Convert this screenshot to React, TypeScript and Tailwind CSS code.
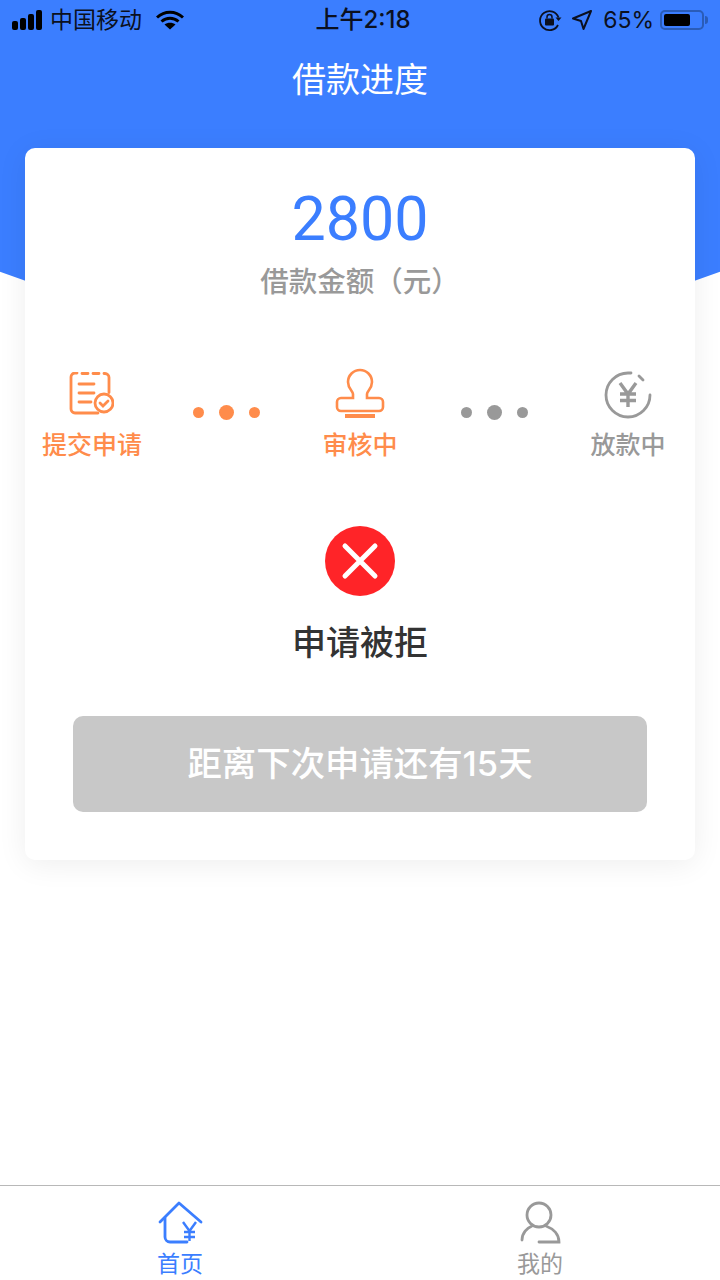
const cjk = "font-['Inter','Noto_Sans_CJK_SC',sans-serif]"

function StatusBar() {
  return (
    <div className="h-[40px] px-[12px] flex items-center justify-between text-[#0b1020] relative">
      <div className="flex items-center">
        <div className="flex items-end gap-[2px] h-[20px] mb-[1px]">
          <span className="w-[6px] h-[9px] rounded-[2px] bg-black"></span>
          <span className="w-[6px] h-[12px] rounded-[2px] bg-black"></span>
          <span className="w-[6px] h-[16px] rounded-[2px] bg-black"></span>
          <span className="w-[6px] h-[20px] rounded-[2px] bg-black"></span>
        </div>
        <span className="ml-[8px] text-[23px] leading-none">中国移动</span>
        <svg className="ml-[14px]" width="28" height="20" viewBox="0 0 28 20">
          <path d="M1 7.5C8.5 .5 19.5 .5 27 7.5" fill="none" stroke="#000" strokeWidth="3" />
          <path d="M5.5 11.5C10.5 7 17.5 7 22.5 11.5" fill="none" stroke="#000" strokeWidth="3" />
          <path d="M14 19.5L8.5 14.5C11.5 12 16.5 12 19.5 14.5Z" fill="#000" />
        </svg>
      </div>
      <div className="absolute left-[6px] right-0 text-center text-[24px] leading-none font-medium">上午2:18</div>
      <div className="flex items-center">
        <svg width="24" height="24" viewBox="0 0 24 24" fill="none">
          <path d="M20.5 9.5A9.5 9.5 0 1 0 20 17" stroke="#0b1020" strokeWidth="1.8" />
          <path d="M17.5 9.5h6l-3 3.5Z" fill="#0b1020" />
          <rect x="7" y="10.5" width="9" height="7" rx="1" fill="#0b1020" />
          <path d="M9 10.5V9a2.5 2.5 0 0 1 5 0v1.5" stroke="#0b1020" strokeWidth="1.5" />
        </svg>
        <svg className="ml-[9px]" width="22" height="22" viewBox="0 0 22 22" fill="none">
          <path d="M20 2L2 9.5l8 2.5 2.5 8Z" stroke="#0b1020" strokeWidth="2" strokeLinejoin="round" />
        </svg>
        <span className="ml-[10px] text-[23px] leading-none">65%</span>
        <div className="ml-[6px] w-[44px] h-[20px] rounded-[5px] border-2 border-[#2a5cb8] p-[2px] flex">
          <div className="w-[26px] h-full rounded-[2px] bg-black"></div>
        </div>
        <div className="ml-[1px] w-[3px] h-[8px] rounded-r-full bg-[#2a5cb8]"></div>
      </div>
    </div>
  )
}

function Dots({ color }: { color: string }) {
  return (
    <div className="h-[46px] flex items-center justify-center gap-[15px] self-start mt-[19px]">
      <span className={`w-[11px] h-[11px] rounded-full ${color}`}></span>
      <span className={`w-[15px] h-[15px] rounded-full ${color}`}></span>
      <span className={`w-[11px] h-[11px] rounded-full ${color}`}></span>
    </div>
  )
}

function Step({ label, color, children }: { label: string; color: string; children: React.ReactNode }) {
  return (
    <div className="flex flex-col items-center">
      <div className="h-[50px] flex items-center justify-center">{children}</div>
      <span className={`mt-[7px] text-[25px] leading-[36px] font-medium ${color}`}>{label}</span>
    </div>
  )
}

function App() {
  return (
    <div className={`relative w-[720px] h-[1280px] bg-white overflow-hidden flex flex-col ${cjk}`}>
      <div className="absolute top-[-1717px] left-[-667px] w-[2054px] h-[2054px] rounded-full bg-[#3b7eff]"></div>
      <div className="relative flex-1 flex flex-col">
        <StatusBar />
        <h1 className="mt-[6px] h-[56px] text-center text-[34px] leading-[68px] text-white">借款进度</h1>

        <div className="mt-[46px] mx-[25px] h-[712px] bg-white rounded-[10px] shadow-[0_4px_30px_rgba(0,0,0,0.07)] flex flex-col items-center">
          <div className="mt-[33px] font-['Roboto',sans-serif] text-[61px] leading-[76px] text-[#3b7eff]">2800</div>
          <div className="mt-[5px] text-[28.500px] leading-[40px] font-medium text-[#999999]">借款金额（元）</div>

          <div className="mt-[68px] w-full grid grid-cols-5">
            <Step label="提交申请" color="text-[#ff8c4b]">
              <svg width="46" height="46" viewBox="0 0 46 46" fill="none" stroke="#ff8c4b" strokeWidth="2.8" strokeLinecap="round" className="mr-[2px]">
                <path d="M30 41H7a4 4 0 0 1-4-4V5a4 4 0 0 1 4-4h2" />
                <path d="M14 1.500h6M25 1.500h6M36 1.500h1a4 4 0 0 1 4 4v15" />
                <path d="M11 12h15M11 21h15M11 30h12" />
                <circle cx="36" cy="31" r="9" />
                <path d="M32 31l3 3 5-5" />
              </svg>
            </Step>
            <Dots color="bg-[#ff8c4b]" />
            <Step label="审核中" color="text-[#ff8c4b]">
              <svg width="48" height="50" viewBox="0 2 48 50" fill="none" stroke="#ff8c4b" strokeWidth="2.6" className="overflow-visible">
                <path d="M17 30v-4c0-3-5-5-5-12a12 12 0 0 1 24 0c0 7-5 9-5 12v4h12a4 4 0 0 1 4 4v5a4 4 0 0 1-4 4H5a4 4 0 0 1-4-4v-5a4 4 0 0 1 4-4Z" />
                <path d="M9 48h30" strokeWidth="4" />
              </svg>
            </Step>
            <Dots color="bg-[#999999]" />
            <Step label="放款中" color="text-[#999999]">
              <svg width="48" height="48" viewBox="0 0 48 48" fill="none" stroke="#999999" strokeWidth="2.8" strokeLinecap="round">
                <path d="M46 24A22 22 0 1 1 24 2h3" />
                <path d="M35 5l4 4" />
                <path d="M16 12l8 11 8-11M24 23v13M16 23h16M16 29.500h16" strokeWidth="3.400" strokeLinecap="butt" />
              </svg>
            </Step>
          </div>

          <div className="mt-[63px] w-[70px] h-[70px] rounded-full bg-[#ff2428] flex items-center justify-center">
            <svg width="38" height="38" viewBox="0 0 38 38" stroke="#ffffff" strokeWidth="5" strokeLinecap="round">
              <path d="M4 4l30 30M34 4L4 34" />
            </svg>
          </div>
          <div className="mt-[23px] text-[34px] leading-[48px] font-medium text-[#333333]">申请被拒</div>

          <button className="mt-[49px] w-[574px] h-[96px] rounded-[10px] bg-[#c8c8c8] text-white text-[34.400px] font-medium">
            距离下次申请还有15天
          </button>
        </div>
      </div>

      <nav className="relative h-[95px] border-t border-[#b8b8b8] bg-white grid grid-cols-2">
        <div className="flex flex-col items-center pt-[15px]">
          <svg width="46" height="44" viewBox="0 0 46 44" fill="none" stroke="#3b7eff" strokeWidth="2.8" strokeLinecap="round" strokeLinejoin="round">
            <path d="M3 21L22 2l22 19" />
            <path d="M8 17v19a5 5 0 0 0 5 5h17" />
            <path d="M26 21l6.500 9 6.500-9M32.500 30v10M27 31h11M27 36h11" strokeWidth="2.400" strokeLinecap="butt" />
          </svg>
          <span className="mt-[3px] text-[23px] leading-[32px] text-[#3b7eff]">首页</span>
        </div>
        <div className="flex flex-col items-center pt-[15px]">
          <svg width="42" height="44" viewBox="0 0 42 44" fill="none" stroke="#999999" strokeWidth="2.800" strokeLinecap="round">
            <circle cx="20" cy="14" r="12" />
            <path d="M3 39C3 32 8 27 13 25M27 25c8 3 13 9 13 16H20" />
          </svg>
          <span className="mt-[3px] text-[23px] leading-[32px] text-[#999999]">我的</span>
        </div>
      </nav>
    </div>
  )
}

export default App
